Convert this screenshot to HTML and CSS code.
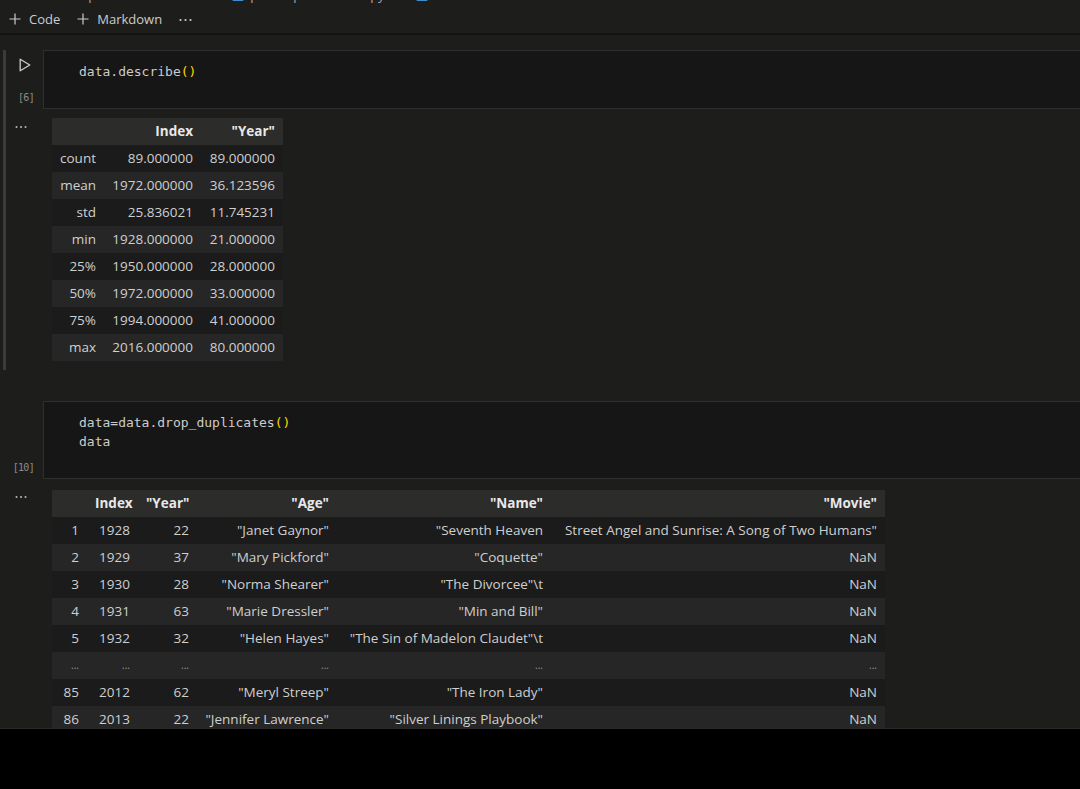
FILE: index.html
```html
<!DOCTYPE html>
<html>
<head>
<meta charset="utf-8">
<link rel="stylesheet" href="styles.css">
</head>
<body>
<div class="screen">
  <div class="breadcrumb">
    <span>C:</span><span class="sep">›</span><span>tools</span><span class="sep">›</span><span>pandas</span><span class="sep">›</span><span>Downloads</span><span class="sep">›</span><span class="bc-icon"></span><span>pradeep main task.ipynb</span><span class="sep">›</span><span class="bc-icon"></span><span>data.info</span>
  </div>
  <div class="toolbar">
    <span class="tb-item"><svg class="plus" width="12" height="12" viewBox="0 0 12 12"><path d="M6 0.5V11.5M0.5 6H11.5" stroke="#cccccc" stroke-width="1.2" fill="none"/></svg><span>Code</span></span>
    <span class="tb-item"><svg class="plus" width="12" height="12" viewBox="0 0 12 12"><path d="M6 0.5V11.5M0.5 6H11.5" stroke="#cccccc" stroke-width="1.2" fill="none"/></svg><span>Markdown</span></span>
    <span class="tb-more"><svg width="13" height="4" viewBox="0 0 13 4"><circle cx="1.5" cy="2" r="1.1" fill="#cccccc"/><circle cx="6.5" cy="2" r="1.1" fill="#cccccc"/><circle cx="11.5" cy="2" r="1.1" fill="#cccccc"/></svg></span>
  </div>

  <div class="notebook">
    <div class="cell focused">
      <div class="cell-row">
        <div class="gutter code-gutter">
          <svg class="run" width="12" height="14" viewBox="0 0 12 14"><path d="M1.2 1.2L10.8 7L1.2 12.8Z" stroke="#cccccc" stroke-width="1.3" fill="none" stroke-linejoin="round"/></svg>
          <span class="count">[6]</span>
        </div>
        <div class="editor"><pre class="code">data.describe<span class="paren">()</span></pre></div>
      </div>
      <div class="cell-row">
        <div class="gutter out-gutter">
          <svg width="12" height="4" viewBox="0 0 12 4"><circle cx="1.5" cy="2" r="1" fill="#bbbbbb"/><circle cx="6" cy="2" r="1" fill="#bbbbbb"/><circle cx="10.5" cy="2" r="1" fill="#bbbbbb"/></svg>
        </div>
        <div class="output out1">
          <table class="df df1">
            <colgroup><col class="w52"><col class="w97"><col class="w82"></colgroup>
            <thead><tr><th></th><th>Index</th><th>"Year"</th></tr></thead>
            <tbody>
              <tr><th>count</th><td>89.000000</td><td>89.000000</td></tr>
              <tr><th>mean</th><td>1972.000000</td><td>36.123596</td></tr>
              <tr><th>std</th><td>25.836021</td><td>11.745231</td></tr>
              <tr><th>min</th><td>1928.000000</td><td>21.000000</td></tr>
              <tr><th>25%</th><td>1950.000000</td><td>28.000000</td></tr>
              <tr><th>50%</th><td>1972.000000</td><td>33.000000</td></tr>
              <tr><th>75%</th><td>1994.000000</td><td>41.000000</td></tr>
              <tr><th>max</th><td>2016.000000</td><td>80.000000</td></tr>
            </tbody>
          </table>
        </div>
      </div>
    </div>

    <div class="cell second">
      <div class="cell-row">
        <div class="gutter code-gutter">
          <svg class="run hidden" width="12" height="14" viewBox="0 0 12 14"><path d="M1.2 1.2L10.8 7L1.2 12.8Z" stroke="#cccccc" stroke-width="1.3" fill="none"/></svg>
          <span class="count">[10]</span>
        </div>
        <div class="editor"><pre class="code">data=data.drop_duplicates<span class="paren">()</span>
data</pre></div>
      </div>
      <div class="cell-row">
        <div class="gutter out-gutter">
          <svg width="12" height="4" viewBox="0 0 12 4"><circle cx="1.5" cy="2" r="1" fill="#bbbbbb"/><circle cx="6" cy="2" r="1" fill="#bbbbbb"/><circle cx="10.5" cy="2" r="1" fill="#bbbbbb"/></svg>
        </div>
        <div class="output out2">
          <table class="df df2">
            <colgroup><col class="w35"><col class="w51"><col class="w59"><col class="w140"><col class="w214"><col class="w334"></colgroup>
            <thead><tr><th></th><th>Index</th><th>"Year"</th><th>"Age"</th><th>"Name"</th><th>"Movie"</th></tr></thead>
            <tbody>
              <tr><th>1</th><td>1928</td><td>22</td><td>"Janet Gaynor"</td><td>"Seventh Heaven</td><td>Street Angel and Sunrise: A Song of Two Humans"</td></tr>
              <tr><th>2</th><td>1929</td><td>37</td><td>"Mary Pickford"</td><td>"Coquette"</td><td>NaN</td></tr>
              <tr><th>3</th><td>1930</td><td>28</td><td>"Norma Shearer"</td><td>"The Divorcee"\t</td><td>NaN</td></tr>
              <tr><th>4</th><td>1931</td><td>63</td><td>"Marie Dressler"</td><td>"Min and Bill"</td><td>NaN</td></tr>
              <tr><th>5</th><td>1932</td><td>32</td><td>"Helen Hayes"</td><td>"The Sin of Madelon Claudet"\t</td><td>NaN</td></tr>
              <tr class="ellipsis"><th>...</th><td>...</td><td>...</td><td>...</td><td>...</td><td>...</td></tr>
              <tr><th>85</th><td>2012</td><td>62</td><td>"Meryl Streep"</td><td>"The Iron Lady"</td><td>NaN</td></tr>
              <tr><th>86</th><td>2013</td><td>22</td><td>"Jennifer Lawrence"</td><td>"Silver Linings Playbook"</td><td>NaN</td></tr>
            </tbody>
          </table>
        </div>
      </div>
    </div>
  </div>
</div>
<div class="letterbox"></div>
</body>
</html>
```

FILE: styles.css
```css
* { box-sizing: border-box; }
html, body { margin: 0; padding: 0; background: #000; }
body { width: 1080px; height: 789px; overflow: hidden; font-family: "Open Sans", "Noto Sans", sans-serif; }

.screen {
  height: 729px;
  overflow: hidden;
  background: #1d1e1c;
  border-bottom: 1px solid #2a2a2a;
}

.breadcrumb {
  height: 22px;
  margin-top: -16px;
  display: flex;
  align-items: center;
  gap: 6px;
  padding-left: 15px;
  font-size: 13px;
  color: #a8a8a8;
  white-space: nowrap;
}
.breadcrumb .sep { color: #8a8a8a; }
.bc-icon { width: 12px; height: 12px; background: #3d8fd1; border-radius: 2px; }

.toolbar {
  height: 29px;
  display: flex;
  align-items: center;
  padding-left: 9px;
  padding-bottom: 2px;
  border-bottom: 2px solid #131313;
  font-size: 13px;
  color: #cccccc;
}
.tb-item { display: flex; align-items: center; gap: 8px; margin-right: 17px; }
.tb-item .plus { display: block; }
.tb-more { display: flex; align-items: center; padding-top: 2px; }
.tb-more svg { display: block; }

.notebook { padding-top: 15px; }

.cell.focused {
  padding-bottom: 9px;
  background: linear-gradient(to right, transparent 3px, #3b3b3b 3px, #3b3b3b 6px, transparent 6px) no-repeat;
}
.cell.second { margin-top: 31px; }

.cell-row { display: flex; }

.gutter { width: 43px; flex: none; }
.code-gutter {
  display: flex;
  flex-direction: column;
  justify-content: space-between;
  padding: 8px 0 4px 0;
}
.run { display: block; margin-left: 19px; }
.run.hidden { visibility: hidden; }
.count {
  display: block;
  text-align: right;
  padding-right: 9px;
  font-family: "DejaVu Sans Mono", monospace;
  font-size: 10px;
  letter-spacing: -0.7px;
  line-height: 14px;
  color: #8c8c8c;
}
.out-gutter { padding: 16px 0 0 15px; }
.out-gutter svg { display: block; }

.editor {
  flex: 1;
  background: #161616;
  border: 1px solid #2e2e2e;
  border-right: none;
  padding: 11px 0 27px 35px;
}
.code {
  margin: 0;
  font-family: "DejaVu Sans Mono", monospace;
  font-size: 13px;
  line-height: 19px;
  color: #cccccc;
}
.paren { color: #ffd700; }

.output { flex: 1; padding-left: 9px; }
.out1 { padding-top: 9px; }
.out2 { padding-top: 11px; }

.df {
  border-collapse: collapse;
  table-layout: fixed;
  font-size: 13.5px;
  color: #cfcfcf;
}
.df1 { width: 231px; }
.df2 { width: 833px; }
.w52 { width: 52px; } .w97 { width: 97px; } .w82 { width: 82px; }
.w35 { width: 35px; } .w51 { width: 51px; } .w59 { width: 59px; }
.w140 { width: 140px; } .w214 { width: 214px; } .w334 { width: 334px; }

.df th, .df td {
  padding: 4px 8px;
  line-height: 19px;
  height: 27px;
  text-align: right;
  white-space: nowrap;
  overflow: hidden;
}
.df tbody th { font-weight: normal; }
.df thead th { font-weight: bold; color: #e8e8e8; background: #2c2c2b; }
.df tbody tr:nth-child(odd) { background: #1b1b1b; }
.df tbody tr:nth-child(even) { background: #262626; }
.df .ellipsis th, .df .ellipsis td { color: #9a9a9a; font-size: 10px; }

.letterbox { height: 60px; background: #000; }
```
